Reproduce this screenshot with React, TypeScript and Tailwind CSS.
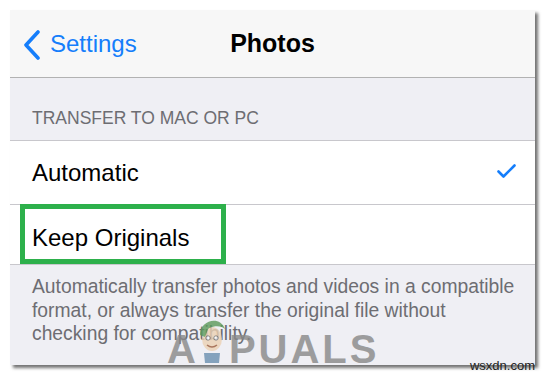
import React from 'react';

const font = { fontFamily: "'Liberation Sans', Arial, sans-serif" };

const App: React.FC = () => {
  return (
    <div className="w-[547px] h-[374px] bg-white overflow-hidden relative" style={font}>
      {/* phone screenshot panel */}
      <div className="relative ml-[10px] mt-[10px] w-[525px] h-[355px] bg-[#efeff4] shadow-[3px_3px_3px_rgba(0,0,0,0.55)] flex flex-col">
        {/* nav bar */}
        <div className="h-[68px] bg-[#f7f7f7] border-b border-[#b2b2b2] grid grid-cols-[1fr_auto_1fr] items-center">
          <div className="flex items-center pl-[13px] gap-[9px] text-[#157efb]">
            <svg width="18" height="30" viewBox="0 0 18 30" className="mt-[2px]">
              <path d="M15 2 L3 15 L15 28" fill="none" stroke="#157efb" strokeWidth="3.6" strokeLinecap="round" strokeLinejoin="round" />
            </svg>
            <span className="text-[24px] leading-none">Settings</span>
          </div>
          <div className="text-[25px] font-bold text-black leading-none">Photos</div>
          <div />
        </div>

        {/* section header */}
        <div className="h-[62px] flex items-end pl-[22px] pb-[13px]">
          <span className="text-[17.5px] leading-none text-[#6d6d72] uppercase">Transfer to Mac or PC</span>
        </div>

        {/* options */}
        <div className="bg-white border-t border-b border-[#c8c7cc]">
          <div className="h-[64px] flex items-center justify-between pl-[22px] pr-[19px] border-b border-[#c8c7cc]">
            <span className="text-[24px] text-black">Automatic</span>
            <svg width="19" height="14" viewBox="0 0 19 14" className="-mt-[3px]">
              <path d="M1.5 7.5 L6.5 12.5 L17.5 1.5" fill="none" stroke="#157efb" strokeWidth="2.6" strokeLinecap="round" strokeLinejoin="round" />
            </svg>
          </div>
          <div className="h-[59px] flex items-center pl-[22px] pt-[6px]">
            <span className="text-[24px] text-black">Keep Originals</span>
          </div>
        </div>

        {/* footer */}
        <div className="pl-[22px] pt-[10px]">
          <p className="w-[490px] text-[19.3px] leading-[23.5px] text-[#6d6d72]">
            Automatically transfer photos and videos in a compatible format, or always transfer the original file without checking for compatibility.
          </p>
        </div>

        {/* highlight box */}
        <div className="absolute left-[10px] top-[194px] w-[206px] h-[60px] border-[5px] border-[#2db04b]" />
      </div>

      {/* watermark */}
      <div className="absolute left-[167px] top-[315px] flex items-baseline text-[40px] font-bold leading-none tracking-[3px] text-[#888888] opacity-80" style={font}>
        <span>A</span>
        <svg width="33" height="48" viewBox="0 0 33 48" className="-ml-[4px] mr-[1px]">
          <ellipse cx="17" cy="24" rx="10" ry="12" fill="#ecd2b4" />
          <path d="M5 20 C5 5 25 0 30 14 C26 10 15 9 5 20 Z" fill="#5c9a5a" />
          <path d="M5 20 C6 14 10 12 14 12 L10 22 Z" fill="#5c9a5a" />
          <circle cx="13" cy="23" r="2.2" fill="#fff" stroke="#555" strokeWidth="0.8" />
          <circle cx="21" cy="23" r="2.2" fill="#fff" stroke="#555" strokeWidth="0.8" />
          <path d="M12 30 Q17 34 22 30" fill="none" stroke="#9a5a3a" strokeWidth="1.5" />
          <path d="M9 38 L25 38 L24 48 L10 48 Z" fill="#6a8fb0" />
        </svg>
        <span>PUALS</span>
      </div>
      <div className="absolute right-[12px] bottom-[2px] text-[13px] leading-none text-[#222]" style={font}>wsxdn.com</div>
    </div>
  );
};

export default App;
